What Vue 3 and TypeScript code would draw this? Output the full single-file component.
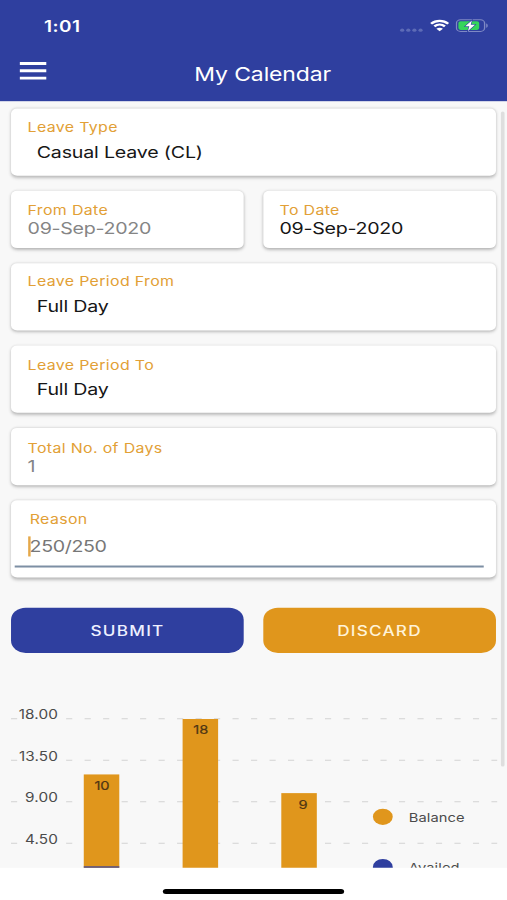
<script setup lang="ts">
interface Tick {
  label: string
  y: number
}
interface Bar {
  x: number
  top: number
  value: number
  labelX: number
}

const ticks: Tick[] = [
  { label: '18.00', y: 27.5 },
  { label: '13.50', y: 68.8 },
  { label: '9.00', y: 110.1 },
  { label: '4.50', y: 151.4 },
]

const bars: Bar[] = [
  { x: 68.4, top: 83, value: 10, labelX: 83.3 },
  { x: 149.1, top: 27.8, value: 18, labelX: 163.9 },
  { x: 229.7, top: 101.6, value: 9, labelX: 247.4 },
]

const legend = [
  { name: 'Balance', y: 125.2, color: '#e0961c' },
  { name: 'Availed', y: 175.2, color: '#2f3f9f' },
]
</script>

<template>
  <div class="screen">
    <header class="header">
      <div class="status">
        <span class="time">1:01</span>
        <div class="indicators">
          <svg class="dots" width="20" height="4" viewBox="0 0 20 4">
            <circle v-for="n in 4" :key="n" :cx="n * 5 - 2.6" cy="2" r="1.7" />
          </svg>
          <svg class="wifi" width="16" height="12" viewBox="0 0 16 12">
            <path d="M1 4.600C5 .8 11 .8 15 4.600" />
            <path d="M3.700 7.300C6.200 5 9.800 5 12.300 7.300" />
            <path class="solid" d="M8 12L5.300 9.500C6.900 8.200 9.100 8.200 10.700 9.500Z" />
          </svg>
          <svg class="battery" width="27" height="13" viewBox="0 0 27 13">
            <rect class="case" x=".7" y=".7" width="23" height="11.600" rx="3.400" />
            <path class="cap" d="M25 4.300C26.700 4.900 26.700 8.100 25 8.700Z" />
            <rect class="level" x="2.300" y="2.200" width="17" height="8.600" rx="1.800" />
            <path class="bolt" d="M13.300 1.300L7.900 7.200H11.200L10.100 11.800L15.900 5.700H12.400Z" />
          </svg>
        </div>
      </div>
      <div class="toolbar">
        <button class="menu" aria-label="Menu">
          <svg width="22" height="19" viewBox="0 0 22 19">
            <path d="M0 2.200H22M0 9.500H22M0 16.800H22" />
          </svg>
        </button>
        <h1>My Calendar</h1>
      </div>
    </header>

    <main class="content">
      <form class="form" @submit.prevent>
        <section class="card select">
          <label>Leave Type</label>
          <p>Casual Leave (CL)</p>
        </section>
        <div class="pair">
          <section class="card field">
            <label>From Date</label>
            <p class="muted date">09-Sep-2020</p>
          </section>
          <section class="card field">
            <label>To Date</label>
            <p class="date">09-Sep-2020</p>
          </section>
        </div>
        <section class="card select">
          <label>Leave Period From</label>
          <p>Full Day</p>
        </section>
        <section class="card select">
          <label>Leave Period To</label>
          <p>Full Day</p>
        </section>
        <section class="card field">
          <label>Total No. of Days</label>
          <p class="muted">1</p>
        </section>
        <section class="card reason">
          <label>Reason</label>
          <div class="entry"><span class="caret"></span><span>250/250</span></div>
        </section>
        <div class="pair actions">
          <button class="submit">SUBMIT</button>
          <button class="discard">DISCARD</button>
        </div>
      </form>

      <svg class="chart" width="414" height="178.100" viewBox="0 0 414 178.100">
        <g v-for="t in ticks" :key="t.label">
          <line class="grid" x1="9" x2="14" :y1="t.y" :y2="t.y" />
          <line class="grid" x1="54" x2="406" :y1="t.y" :y2="t.y" />
          <text class="tick" x="47.300" :y="t.y + 0.700">{{ t.label }}</text>
        </g>
        <g v-for="b in bars" :key="b.x">
          <rect class="bar" :x="b.x" :y="b.top" width="29" :height="178.1 - b.top" />
          <text class="value" :x="b.labelX" :y="b.top + 15.400">{{ b.value }}</text>
        </g>
        <rect class="availed" x="68.400" y="174.400" width="29" height="3.700" />
        <g v-for="l in legend" :key="l.name">
          <circle cx="312.600" :cy="l.y" r="8.100" :fill="l.color" />
          <text class="legend" x="333.800" :y="l.y + 5.200">{{ l.name }}</text>
        </g>
      </svg>
      <span class="scrollbar"></span>
    </main>

    <footer class="home"><span></span></footer>
  </div>
</template>

<style>
body {
  margin: 0;
  overflow: hidden;
  background: #fff;
}
#app {
  width: 507px;
  height: 900px;
  overflow: hidden;
}
</style>

<style scoped>
/* The 414x896 handset layout is stretched to fill the window. */
.screen {
  width: 414px;
  height: 896px;
  display: flex;
  flex-direction: column;
  transform: scale(1.22464, 1.00446);
  transform-origin: 0 0;
  background: #fff;
  font-family: Inter, Roboto, sans-serif;
  color: #161616;
}
.header {
  height: 100.5px;
  flex: none;
  background: #2f3f9f;
  color: #fff;
}
.status {
  height: 44px;
  box-sizing: border-box;
  padding: 16.500px 15.500px 0 36px;
  display: flex;
  justify-content: space-between;
  align-items: flex-start;
}
.time {
  font-size: 15.500px;
  line-height: 20px;
  font-weight: 600;
  letter-spacing: 0.35px;
}
.indicators {
  display: flex;
  align-items: center;
  padding-top: 2.900px;
}
.dots {
  margin: 7.500px 4.500px 0 0;
  fill: #5d6bb6;
}
.wifi {
  margin: -1px 5px 0 0.500px;
  width: 16px;
  overflow: visible;
  fill: none;
  stroke: #fff;
  stroke-width: 2.200;
}
.wifi .solid {
  fill: #fff;
  stroke: none;
}
.case {
  fill: none;
  stroke: #7f89c4;
  stroke-width: 1.100;
}
.cap {
  fill: #7f89c4;
}
.level {
  fill: #35d45b;
}
.bolt {
  fill: #fff;
  stroke: #2f3f9f;
  stroke-width: 1;
  paint-order: stroke;
}
.toolbar {
  height: 56.500px;
  display: grid;
  grid-template-columns: 54px 1fr 54px;
  align-items: center;
}
.menu {
  width: 22px;
  margin: -4px 0 0 16px;
  padding: 0;
  border: 0;
  background: none;
}
.menu svg {
  display: block;
  stroke: #fff;
  stroke-width: 2.900;
}
h1 {
  margin: 4.600px 0 0 15px;
  text-align: center;
  font-size: 18.800px;
  line-height: 24px;
  font-weight: 400;
  letter-spacing: -0.100px;
}
.content {
  position: relative;
  height: 763.700px;
  flex: none;
  overflow: hidden;
  background: #f8f8f8;
}
.form {
  display: flex;
  flex-direction: column;
  gap: 15.150px;
  padding: 7.600px 9px 0;
}
.card {
  box-sizing: border-box;
  background: #fff;
  border-radius: 5px;
  box-shadow: 0 1.500px 3px rgba(0, 0, 0, 0.24), 0 0 2px rgba(0, 0, 0, 0.06);
}
.select {
  height: 67px;
  padding: 10.400px 13.500px 0;
}
.select p {
  margin: 6.300px 0 0 7.500px;
}
.field {
  height: 56.700px;
  padding: 11.200px 13.500px 0;
}
label {
  display: block;
  font-size: 13px;
  line-height: 16px;
  letter-spacing: 0.28px;
  color: #e2a036;
}
p {
  margin: 0;
  font-size: 16px;
  line-height: 20px;
  letter-spacing: -0.150px;
}
.date {
  letter-spacing: -0.220px;
}
.muted {
  color: #858585;
}
.pair {
  display: grid;
  grid-template-columns: 1fr 1fr;
  gap: 15.500px;
}
.reason {
  height: 76.800px;
  padding: 10.900px 10px 0 3.300px;
}
.reason label {
  margin-left: 12px;
}
.entry {
  height: 40px;
  box-sizing: border-box;
  border-bottom: 2px solid #7d8fa4;
  padding: 8.700px 0 0 10.400px;
  display: flex;
  font-size: 16px;
  line-height: 20px;
  letter-spacing: -0.300px;
  color: #777;
}
.caret {
  width: 2px;
  height: 20px;
  margin-right: -0.500px;
  background: #e5a849;
}
.actions {
  margin-top: 15px;
}
.actions button {
  height: 45.200px;
  padding: 0;
  border: 0;
  border-radius: 12px;
  color: #fff;
  font: 500 14px/20px Inter, Roboto, sans-serif;
  letter-spacing: 1px;
}
.actions .submit {
  background: #2f3f9f;
  color: #eef1ff;
}
.actions .discard {
  background: #e0961c;
  color: #fff3d8;
}
.chart {
  display: block;
  margin-top: 38px;
}
.grid {
  stroke: #d2d2d2;
  stroke-width: 1;
  stroke-dasharray: 5 10.100;
}
.tick,
.legend {
  font-size: 12px;
  letter-spacing: 0.080px;
  fill: #4b4b4b;
}
.tick {
  font-size: 12.500px;
  text-anchor: end;
}
.bar {
  fill: #e0961c;
}
.value {
  font-size: 12px;
  fill: #4e3514;
  stroke: #4e3514;
  stroke-width: 0.2;
  text-anchor: middle;
}
.availed {
  fill: #52508c;
}
.scrollbar {
  position: absolute;
  top: 10.500px;
  right: 1.700px;
  width: 3px;
  height: 652px;
  border-radius: 2px;
  background: #dedede;
}
.home {
  flex: 1;
  display: flex;
  justify-content: center;
  align-items: flex-start;
  padding-top: 20.800px;
}
.home span {
  width: 148px;
  height: 5.400px;
  border-radius: 3px;
  background: #000;
}
</style>
